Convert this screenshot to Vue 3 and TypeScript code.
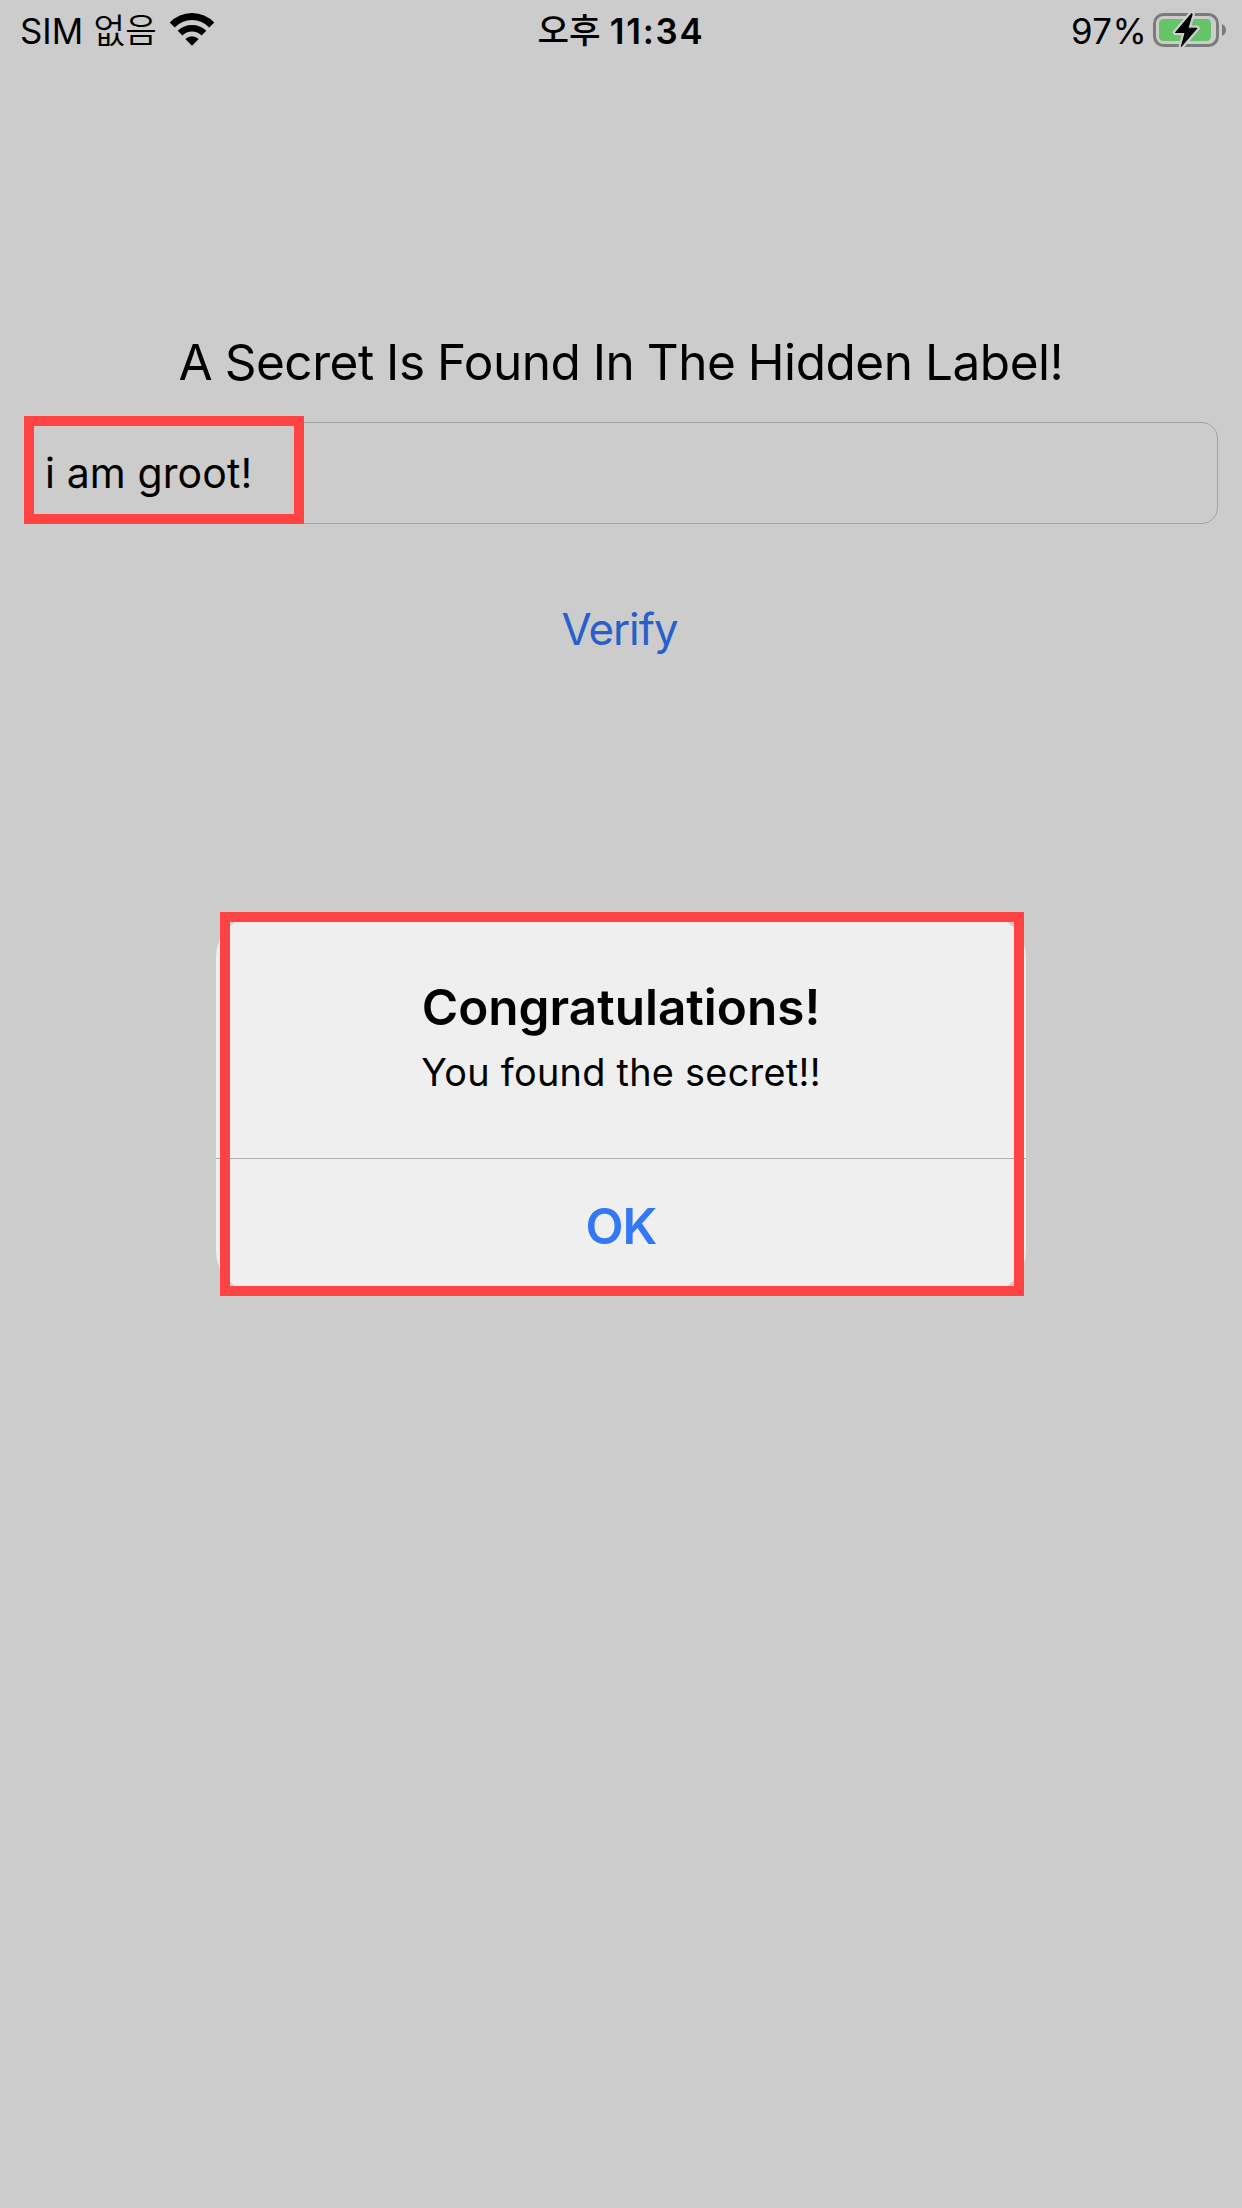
<script setup lang="ts">
import { ref } from 'vue'

const secret = ref('i am groot!')
</script>

<template>
  <main class="screen">
    <header class="status">
      <div class="side">
        <span class="sim">SIM</span><span class="ko">없음</span>
        <svg class="wifi" viewBox="0 0 46 34" width="46" height="34">
          <path d="M0.7 9.6A30.7 30.7 0 0 1 45.3 9.6L40.3 14.4A24.1 24.1 0 0 0 5.7 14.4Z" />
          <path d="M8.7 17.8A20.6 20.6 0 0 1 37.3 17.8L32.6 22.5A13.8 13.8 0 0 0 13.4 22.5Z" />
          <path d="M16.3 26A9.7 9.7 0 0 1 29.7 26L23 32.7Z" />
        </svg>
      </div>
      <div class="time"><span class="ko">오후</span><span class="clock">11:34</span></div>
      <div class="side end">
        <span class="pct">97%</span>
        <svg class="battery" viewBox="0 0 74 38" width="74" height="38">
          <rect x="1.5" y="3.5" width="63" height="31" rx="9" fill="none" stroke="#7b7b7b" stroke-width="3" />
          <rect x="6" y="8" width="52" height="22" rx="4.5" fill="#65c466" />
          <path d="M69 13Q73 15 73 19Q73 23 69 25Z" fill="#7b7b7b" />
          <g stroke-linejoin="round">
            <path d="M38.6 2.500L22.500 21.500H32.200L28.300 35.500L44 17.200H35L39.200 3Z" fill="none" stroke="#cccccc" stroke-width="5.500" />
            <path d="M38.600 2.500L22.500 21.500H32.200L28.300 35.500L44 17.200H35L39.200 3Z" stroke="#000" stroke-width="1" />
          </g>
        </svg>
      </div>
    </header>

    <h1>A Secret Is Found In The Hidden Label!</h1>
    <div class="field">
      <span>{{ secret }}</span>
      <i class="mark field-mark"></i>
    </div>
    <button class="verify">Verify</button>

    <section class="alert">
      <div class="sheet">
        <div class="message">
          <h2>Congratulations!</h2>
          <p>You found the secret!!</p>
        </div>
        <button class="ok">OK</button>
      </div>
      <i class="mark alert-mark"></i>
    </section>
  </main>
</template>

<style>
body { margin: 0; background: #cccccc; }
</style>

<style scoped>
.screen {
  width: 1242px;
  height: 2208px;
  background: #cccccc;
  color: #000;
  font-family: Inter, "Noto Sans CJK KR", sans-serif;
  display: flex;
  flex-direction: column;
  overflow: hidden;
}
button { border: 0; padding: 0; background: none; font-family: inherit; }
.status {
  height: 60px;
  display: grid;
  grid-template-columns: 1fr auto 1fr;
  font-size: 34.8px;
  line-height: 62px;
  white-space: nowrap;
}
.side, .time { display: flex; }
.side { padding-left: 20px; }
.end { justify-content: flex-end; padding: 0 15px 0 0; }
.ko {
  font-family: "Noto Sans CJK KR", sans-serif;
  font-size: 34.3px;
  line-height: 57px;
  font-weight: 350;
  margin-left: 10.5px;
}
.wifi { margin: 13px 0 0 12.3px; }
.time .ko { font-weight: 500; margin: 0 9px 0 0; }
.clock { font-weight: 600; letter-spacing: 1.8px; }
.pct { letter-spacing: 0.4px; }
.battery { margin: 11px 0 0 6px; }
h1 {
  margin: 272px 0 0;
  height: 90px;
  line-height: 60px;
  font-size: 49.5px;
  font-weight: 400;
  letter-spacing: -0.45px;
  word-spacing: -1.14px;
  text-align: center;
}
.field {
  position: relative;
  box-sizing: border-box;
  width: 1194px;
  height: 102px;
  margin-left: 24px;
  border: 1px solid #a3a3a3;
  border-radius: 16px;
  padding-left: 20px;
  font-size: 41px;
  letter-spacing: 0.1px;
  line-height: 101px;
}
.mark { position: absolute; box-sizing: border-box; border: 10px solid #ff4242; }
.field-mark { left: -1px; top: -7px; width: 280px; height: 108px; }
.verify {
  margin-top: 76px;
  height: 60px;
  padding-right: 3px;
  font-size: 43.8px;
  letter-spacing: -1px;
  line-height: 60px;
  color: #2760cb;
}
.alert { position: relative; width: 810px; height: 378px; margin: 255px 0 0 216px; text-align: center; }
.sheet { height: 378px; border-radius: 42px; background: #efefef; overflow: hidden; }
.message { height: 243px; border-bottom: 1px solid #adaeb0; }
h2 { margin: 0; padding-top: 62px; font-size: 49.5px; line-height: 60px; font-weight: 600; }
p { margin: 10px 0 0; font-size: 37.8px; letter-spacing: 0.3px; line-height: 50px; }
.ok {
  width: 100%;
  height: 134px;
  font-size: 49.5px;
  letter-spacing: -1px;
  line-height: 134px;
  font-weight: 600;
  color: #3478f6;
}
.alert-mark { left: 4px; top: -3px; width: 804px; height: 384px; }
</style>
